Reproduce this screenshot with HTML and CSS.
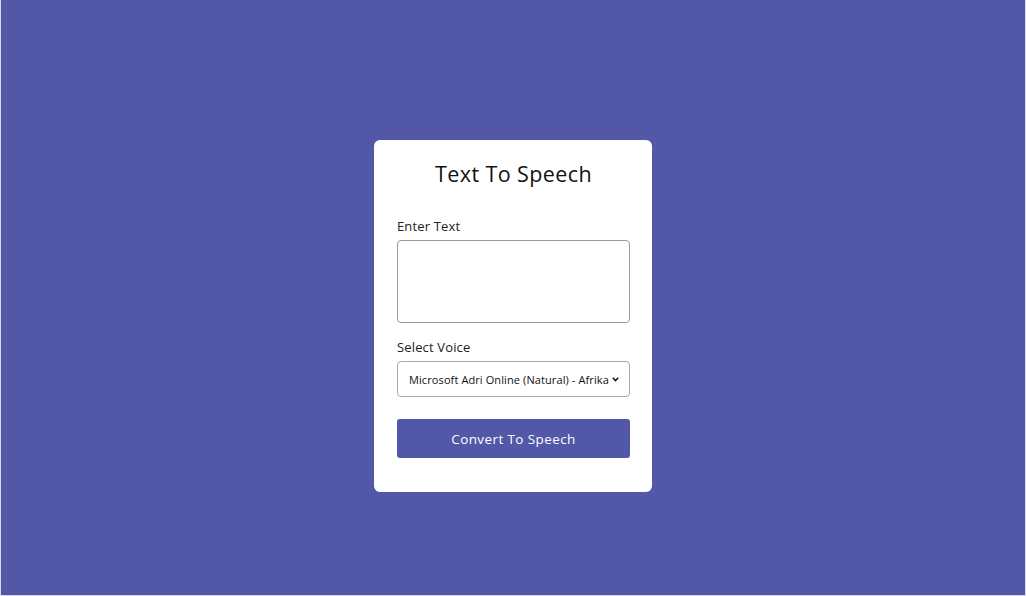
FILE: index.html
```html
<!DOCTYPE html>
<html lang="en">
<head>
<meta charset="utf-8">
<title>Text To Speech</title>
<link rel="stylesheet" href="styles.css">
</head>
<body>
<div class="page">
  <div class="card">
    <h1 class="title">Text To Speech</h1>
    <label class="label" for="text">Enter Text</label>
    <textarea id="text" class="textarea"></textarea>
    <label class="label" for="voice">Select Voice</label>
    <div class="select">
      <span class="select-text">Microsoft Adri Online (Natural) - Afrika</span>
      <svg class="chev" width="7" height="5" viewBox="0 0 7 5"><path d="M0.8 0.8 L3.5 3.6 L6.2 0.8" fill="none" stroke="#111" stroke-width="1.5"/></svg>
    </div>
    <button class="btn">Convert To Speech</button>
  </div>
</div>
</body>
</html>
```
FILE: styles.css
```css
html, body {
  margin: 0;
  padding: 0;
}
body {
  font-family: "Open Sans", "Noto Sans", sans-serif;
}
.page {
  height: 596px;
  box-sizing: border-box;
  padding-top: 36px;
  background: #5257a8;
  display: flex;
  align-items: center;
  justify-content: center;
  box-shadow: inset 1px 0 #d8d8e8, inset -1px 0 #d8d8e8, inset 0 -1px #d8d8e8;
}
.card {
  width: 278px;
  height: 352px;
  box-sizing: border-box;
  background: #fff;
  border-radius: 6px;
  padding: 19px 22px 0 23px;
  display: flex;
  flex-direction: column;
}
.title {
  margin: 0 0 28px;
  font-size: 21.5px;
  letter-spacing: 0.4px;
  font-weight: 400;
  text-align: center;
  color: #111;
  line-height: 30px;
}
.label {
  font-size: 13px;
  letter-spacing: 0.15px;
  color: #222;
  line-height: 18px;
  margin-bottom: 5px;
}
.textarea {
  width: 233px;
  height: 83px;
  box-sizing: border-box;
  border: 1px solid #9a9a9a;
  border-radius: 4px;
  resize: none;
  margin: 0 0 15px;
  padding: 0;
}
.select {
  width: 233px;
  height: 36px;
  box-sizing: border-box;
  border: 1px solid #a8a8a8;
  border-radius: 4px;
  display: flex;
  align-items: center;
  justify-content: space-between;
  padding: 0 10px 0 11px;
  margin-bottom: 22px;
}
.select-text {
  font-size: 11px;
  letter-spacing: 0.1px;
  color: #111;
  white-space: nowrap;
}
.chev {
  flex: none;
  margin-left: 2px;
}
.btn {
  width: 233px;
  height: 39px;
  border: none;
  border-radius: 3px;
  background: #5257a8;
  color: #fff;
  font-family: inherit;
  font-size: 13.5px;
  letter-spacing: 0.4px;
  padding: 0;
}
```
